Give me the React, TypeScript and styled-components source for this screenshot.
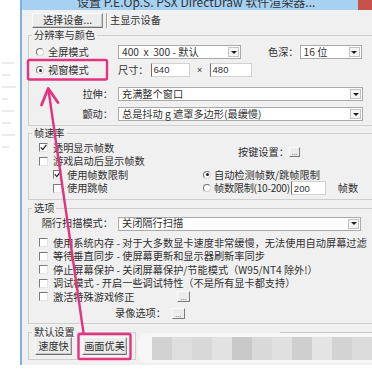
import styled, { createGlobalStyle } from "styled-components";

const PINK = "#e2347f";

const GlobalStyle = createGlobalStyle`
  html, body {
    margin: 0;
    padding: 0;
    background: #ffffff;
  }
  body {
    width: 372px;
    height: 378px;
    overflow: hidden;
    font-family: "Noto Sans CJK SC", "Liberation Sans", sans-serif;
    font-size: 10.2px;
    line-height: 1;
    color: #303030;
  }
`;

const Page = styled.div`
  position: relative;
  width: 372px;
  height: 378px;
  overflow: hidden;
  display: flex;
  align-items: flex-start;
`;

const Backdrop = styled.div`
  width: 20px;
  flex-shrink: 0;
  display: flex;
  flex-direction: column;
  gap: 10px;
  padding: 62px 0 0 2px;
  box-sizing: border-box;
`;

const Smudge = styled.span<{ $w: number }>`
  display: block;
  width: ${(p) => p.$w}px;
  height: 2px;
  background: #ebebeb;
`;

const Window = styled.div`
  flex-shrink: 0;
  width: 390px;
  border-left: 2px solid #7fb3e6;
  background: #f0f0f0;
  display: flex;
  flex-direction: column;
`;

const TitleBar = styled.div`
  height: 10px;
  display: flex;
  overflow: hidden;
  background: #a7d1f1;
`;

const Title = styled.div`
  margin: -4px 0 0 55px;
  font-size: 12px;
  line-height: 12px;
  color: #30343a;
  white-space: nowrap;
`;

const CloseBox = styled.div`
  margin-left: auto;
  margin-right: 8px;
  width: 46px;
  height: 10px;
  flex-shrink: 0;
  background: #c9514b;
`;

const Client = styled.div`
  padding: 3px 6px 5px 6px;
  display: flex;
  flex-direction: column;
`;

const DeviceRow = styled.div`
  display: flex;
  align-items: center;
  height: 15px;
  margin-left: 4px;
`;

const PushButton = styled.button<{ $w: number; $h: number }>`
  width: ${(p) => p.$w}px;
  height: ${(p) => p.$h}px;
  flex-shrink: 0;
  padding: 0;
  font: inherit;
  color: #303030;
  background: #ececec;
  border: 1px solid;
  border-color: #fbfbfb #8a8a8a #6f6f6f #fbfbfb;
  box-shadow: inset -1px -1px 0 #c8c8c8;
`;

const Divider = styled.span`
  width: 0;
  height: 15px;
  margin: 0 2px 0 3px;
  border-left: 1px solid #a3a3a3;
  border-right: 1px solid #ffffff;
`;

const Group = styled.fieldset<{ $gap: number; $width?: number }>`
  margin: ${(p) => p.$gap}px 0 0 0;
  padding: 0;
  min-width: 0;
  border: 1px solid #cfcfcf;
  ${(p) => (p.$width ? `width: ${p.$width}px; box-sizing: border-box; align-self: flex-start;` : "")}
`;

const Legend = styled.legend`
  margin-left: 3px;
  padding: 0 2px;
  line-height: 10px;
  height: 10px;
`;

const GroupBody = styled.div<{ $pad: string }>`
  padding: ${(p) => p.$pad};
  display: flex;
  flex-direction: column;
`;

const Row = styled.div<{ $mt?: number }>`
  display: flex;
  align-items: center;
  height: 14px;
  margin-top: ${(p) => p.$mt ?? 0}px;
  white-space: nowrap;
`;

const Choice = styled.label<{ $w?: number; $gap: number }>`
  display: flex;
  align-items: center;
  gap: ${(p) => p.$gap}px;
  ${(p) => (p.$w ? `width: ${p.$w}px;` : "")}
  flex-shrink: 0;
  height: 13.5px;
  white-space: nowrap;
`;

const RadioDot = styled.span<{ $on?: boolean }>`
  width: 8px;
  height: 8px;
  box-sizing: border-box;
  flex-shrink: 0;
  border-radius: 50%;
  border: 1px solid;
  border-color: #747474 #d4d4d4 #d4d4d4 #747474;
  background: #ffffff;
  display: flex;
  align-items: center;
  justify-content: center;

  &::after {
    content: "";
    width: 3px;
    height: 3px;
    border-radius: 50%;
    background: ${(p) => (p.$on ? "#222" : "transparent")};
  }
`;

const CheckRow = styled.label<{ $indent?: number }>`
  display: flex;
  align-items: center;
  gap: 5px;
  height: 13.5px;
  padding-left: ${(p) => p.$indent ?? 0}px;
  white-space: nowrap;
`;

const Box = styled.span`
  width: 9px;
  height: 9px;
  box-sizing: border-box;
  flex-shrink: 0;
  border-top: 1px solid #7a7a7a;
  border-left: 1px solid #7a7a7a;
  border-right: 1px solid #e4e4e4;
  border-bottom: 1px solid #e4e4e4;
  background: #ffffff;
  display: flex;
  align-items: center;
  justify-content: center;
`;

const Caption = styled.span<{ $w?: number; $ml?: number; $right?: boolean; $pr?: number; $tight?: boolean }>`
  ${(p) => (p.$w ? `width: ${p.$w}px; flex-shrink: 0;` : "")}
  margin-left: ${(p) => p.$ml ?? 0}px;
  padding-right: ${(p) => p.$pr ?? 0}px;
  box-sizing: border-box;
  text-align: ${(p) => (p.$right ? "right" : "left")};
  letter-spacing: ${(p) => (p.$tight ? "-0.3px" : "0")};
  white-space: pre;
`;

const Combo = styled.div<{ $w: number; $ml?: number }>`
  width: ${(p) => p.$w}px;
  margin-left: ${(p) => p.$ml ?? 0}px;
  height: 14px;
  box-sizing: border-box;
  flex-shrink: 0;
  display: flex;
  align-items: center;
  justify-content: space-between;
  padding: 0 1px 0 3px;
  background: #ffffff;
  border: 1px solid #a9a9a9;
  white-space: pre;
`;

const DropArrow = styled.span`
  width: 11px;
  height: 10px;
  box-sizing: border-box;
  flex-shrink: 0;
  border: 1px solid #c2c2c2;
  background: #f4f4f4;
  display: flex;
  align-items: center;
  justify-content: center;

  &::after {
    content: "";
    border-left: 3px solid transparent;
    border-right: 3px solid transparent;
    border-top: 3px solid #1e1e1e;
  }
`;

const Field = styled.div<{ $w: number; $ml?: number }>`
  width: ${(p) => p.$w}px;
  margin-left: ${(p) => p.$ml ?? 0}px;
  height: 14px;
  box-sizing: border-box;
  flex-shrink: 0;
  display: flex;
  align-items: center;
  padding-left: 2px;
  background: #ffffff;
  border: 1px solid #d2d2d2;
  border-left-color: #6d6d6d;
  font-family: "Liberation Sans", sans-serif;
  font-size: 9.5px;
`;

const Times = styled.span`
  width: 20px;
  text-align: center;
  flex-shrink: 0;
  font-family: "Liberation Sans", sans-serif;
  font-size: 9px;
`;

const DotButton = styled.span<{ $w: number; $h: number; $ml?: number }>`
  width: ${(p) => p.$w}px;
  height: ${(p) => p.$h}px;
  margin-left: ${(p) => p.$ml ?? 0}px;
  box-sizing: border-box;
  flex-shrink: 0;
  border: 1px solid;
  border-color: #fafafa #7b7b7b #7b7b7b #fafafa;
  background: #ececec;
  display: flex;
  align-items: flex-end;
  justify-content: center;
  font-family: "Liberation Sans", sans-serif;
  font-size: 7px;
  line-height: 6px;
  color: #444;
`;

const RateColumns = styled.div`
  display: flex;
  padding: 3px 0 4px 10px;
`;

const RateLeft = styled.div`
  width: 164px;
  flex-shrink: 0;
  display: flex;
  flex-direction: column;
`;

const RateRight = styled.div`
  display: flex;
  flex-direction: column;
`;

const KeyRow = styled.div`
  height: 27px;
  box-sizing: border-box;
  padding: 0 0 5px 35px;
  display: flex;
  align-items: center;
  white-space: nowrap;
`;

const CheckList = styled.div`
  display: flex;
  flex-direction: column;
  margin-top: 5.5px;
  padding-left: 3px;
`;

const PresetRow = styled.div`
  display: flex;
  gap: 10px;
  padding: 0 0 4px 6px;
`;

const Mosaic = styled.div`
  position: absolute;
  left: 138px;
  top: 333px;
  width: 234px;
  height: 30px;
  box-sizing: border-box;
  padding: 4px 0 3px 14px;
  display: flex;
  background: #f7f7f7;
  border-radius: 10px 0 0 10px;

  &::before {
    content: "";
    position: absolute;
    left: 142px;
    right: 0;
    top: -1px;
    height: 1px;
    background: #c9c9c9;
  }
`;

const Tile = styled.span<{ $shade: string }>`
  flex: 1;
  background: ${(p) => p.$shade};
`;

const Annotations = styled.svg`
  position: absolute;
  left: 0;
  top: 0;
  width: 372px;
  height: 378px;
  pointer-events: none;
`;

const tiles = ["#d2d2d2", "#dedede", "#d8d8d8", "#e2e2e2", "#c9c9c9", "#d9d9d9", "#e0e0e0", "#cfcfcf", "#e4e4e4", "#d3d3d3", "#dcdcdc"];

const Check = ({ on }: { on?: boolean }) => (
  <Box>
    {on && (
      <svg width="7" height="7" viewBox="0 0 7 7">
        <path d="M0.8 3.4 L2.8 5.6 L6.4 0.8" fill="none" stroke="#222" strokeWidth="1.3" />
      </svg>
    )}
  </Box>
);

const Select = ({ w, ml, children }: { w: number; ml?: number; children: string }) => (
  <Combo $w={w} $ml={ml}>
    <span>{children}</span>
    <DropArrow />
  </Combo>
);

export default function App() {
  return (
    <Page>
      <GlobalStyle />
      <Backdrop>
        <Smudge $w={12} />
        <Smudge $w={8} />
        <Smudge $w={14} />
        <Smudge $w={6} />
        <Smudge $w={12} />
        <Smudge $w={9} />
        <Smudge $w={13} />
        <Smudge $w={7} />
      </Backdrop>

      <Window>
        <TitleBar>
          <Title>设置 P.E.Op.S. PSX DirectDraw 软件渲染器...</Title>
          <CloseBox />
        </TitleBar>

        <Client>
          <DeviceRow>
            <PushButton $w={71} $h={15}>选择设备...</PushButton>
            <Divider />
            <span>主显示设备</span>
          </DeviceRow>

          <Group $gap={2}>
            <Legend>分辨率与颜色</Legend>
            <GroupBody $pad="5px 0 4px 7px">
              <Row>
                <Choice $w={82} $gap={4}>
                  <RadioDot />
                  全屏模式
                </Choice>
                <Select w={123}>{"400  x  300 - 默认"}</Select>
                <Caption $ml={27}>色深：</Caption>
                <Select w={62} ml={1}>{"16 位"}</Select>
              </Row>
              <Row $mt={4}>
                <Choice $w={82} $gap={4}>
                  <RadioDot $on />
                  视窗模式
                </Choice>
                <Caption>尺寸：</Caption>
                <Field $w={39} $ml={2}>640</Field>
                <Times>×</Times>
                <Field $w={42}>480</Field>
              </Row>
              <Row $mt={10}>
                <Caption $w={82} $right $pr={5}>拉伸：</Caption>
                <Select w={245}>充满整个窗口</Select>
              </Row>
              <Row $mt={6}>
                <Caption $w={82} $right $pr={5}>颤动：</Caption>
                <Select w={245}>总是抖动 g 遮罩多边形(最缓慢)</Select>
              </Row>
            </GroupBody>
          </Group>

          <Group $gap={2}>
            <Legend>帧速率</Legend>
            <RateColumns>
              <RateLeft>
                <CheckRow>
                  <Check on />
                  透明显示帧数
                </CheckRow>
                <CheckRow>
                  <Check />
                  游戏启动后显示帧数
                </CheckRow>
                <CheckRow $indent={14}>
                  <Check on />
                  使用帧数限制
                </CheckRow>
                <CheckRow $indent={14}>
                  <Check />
                  使用跳帧
                </CheckRow>
              </RateLeft>
              <RateRight>
                <KeyRow>
                  按键设置：
                  <DotButton $w={11} $h={10}>...</DotButton>
                </KeyRow>
                <Choice $gap={3}>
                  <RadioDot $on />
                  自动检测帧数/跳帧限制
                </Choice>
                <Choice $gap={3}>
                  <RadioDot />
                  <Caption $tight>帧数限制(10-200)</Caption>
                  <Field $w={35} $ml={-2}>200</Field>
                  <Caption $ml={9}>帧数</Caption>
                </Choice>
              </RateRight>
            </RateColumns>
          </Group>

          <Group $gap={3}>
            <Legend>选项</Legend>
            <GroupBody $pad="3.5px 0 3px 7px">
              <Row>
                <Caption $w={82} $right $pr={5}>隔行扫描模式：</Caption>
                <Select w={243}>关闭隔行扫描</Select>
              </Row>
              <CheckList>
                <CheckRow>
                  <Check />
                  使用系统内存 - 对于大多数显卡速度非常缓慢，无法使用自动屏幕过滤
                </CheckRow>
                <CheckRow>
                  <Check />
                  等待垂直同步 - 使屏幕更新和显示器刷新率同步
                </CheckRow>
                <CheckRow>
                  <Check />
                  停止屏幕保护 - 关闭屏幕保护/节能模式（W95/NT4 除外!）
                </CheckRow>
                <CheckRow>
                  <Check />
                  调试模式 - 开启一些调试特性（不是所有显卡都支持）
                </CheckRow>
                <CheckRow>
                  <Check />
                  <Caption $w={119}>激活特殊游戏修正</Caption>
                  <DotButton $w={13} $h={11}>...</DotButton>
                </CheckRow>
              </CheckList>
              <Row $mt={2.5}>
                <Caption $w={136} $right $pr={6}>录像选项：</Caption>
                <DotButton $w={13} $h={11}>...</DotButton>
              </Row>
            </GroupBody>
          </Group>

          <Group $gap={3} $width={108}>
            <Legend>默认设置</Legend>
            <PresetRow>
              <PushButton $w={37} $h={18}>速度快</PushButton>
              <PushButton $w={45} $h={18}>画面优美</PushButton>
            </PresetRow>
          </Group>
        </Client>
      </Window>

      <Mosaic>
        {tiles.map((shade, i) => (
          <Tile key={i} $shade={shade} />
        ))}
      </Mosaic>

      <Annotations viewBox="0 0 372 378">
        <rect x="28" y="60" width="79" height="19.5" rx="1.5" fill="none" stroke={PINK} strokeWidth="2.4" />
        <rect x="78.5" y="334" width="52" height="25" rx="1.5" fill="none" stroke={PINK} strokeWidth="2.4" />
        <line x1="83.5" y1="333" x2="48.5" y2="90" stroke={PINK} strokeWidth="2.4" />
        <polyline points="41.5,105 48.2,88.5 58,102.5" fill="none" stroke={PINK} strokeWidth="2.8" strokeLinecap="round" strokeLinejoin="round" />
      </Annotations>
    </Page>
  );
}
